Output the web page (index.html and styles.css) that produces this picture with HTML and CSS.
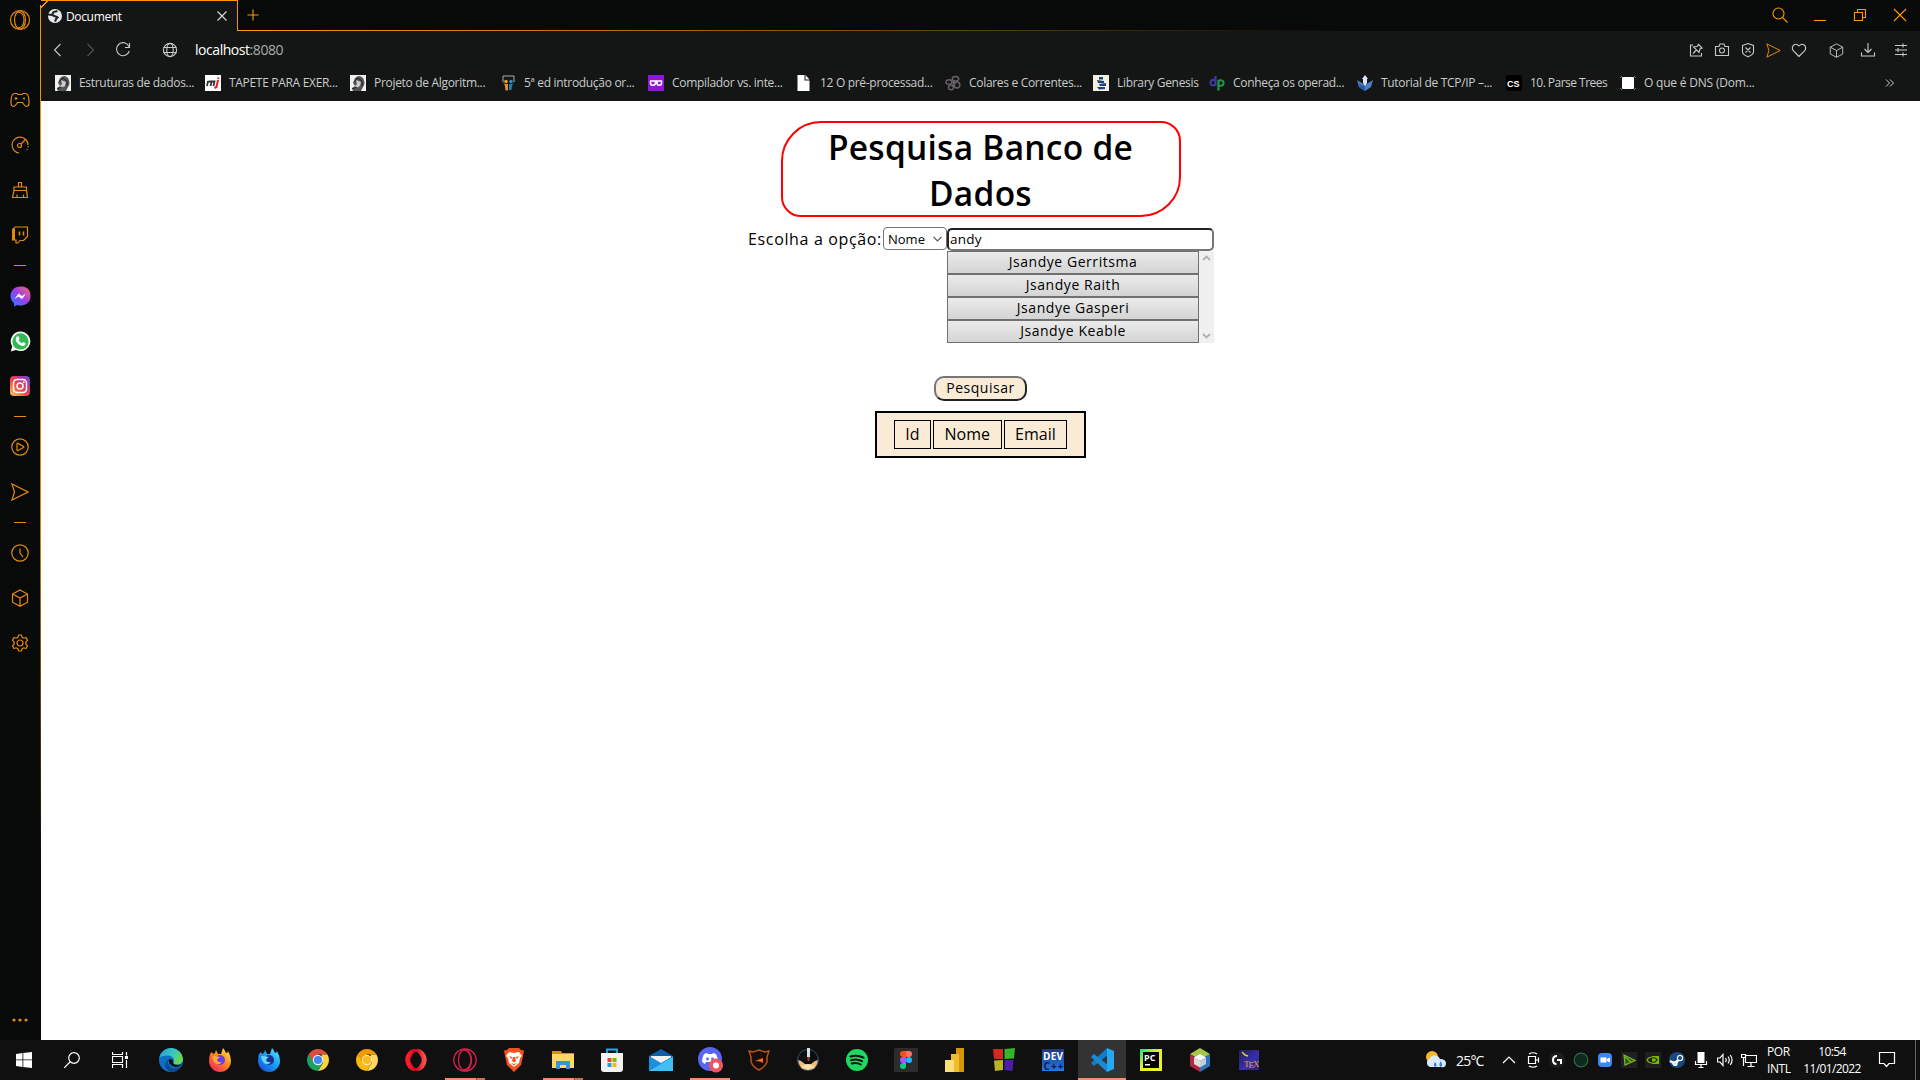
FILE: index.html
```
<!DOCTYPE html>
<html lang="pt-BR">
<head>
<meta charset="utf-8">
<title>Document</title>
<link rel="stylesheet" href="styles.css">
</head>
<body>
<svg class="defs" aria-hidden="true">
  <defs>
    <linearGradient id="gMsg" x1="0" y1="1" x2="1" y2="0"><stop offset="0" stop-color="#1687ff"/><stop offset=".5" stop-color="#9a3cf0"/><stop offset="1" stop-color="#ff6a5c"/></linearGradient>
    <linearGradient id="gIg" x1="0" y1="1" x2="1" y2="0"><stop offset="0" stop-color="#ffd060"/><stop offset=".4" stop-color="#f3503c"/><stop offset=".7" stop-color="#c82d91"/><stop offset="1" stop-color="#5a50d8"/></linearGradient>
    <linearGradient id="gEdge" x1="0" y1="0" x2="1" y2=".4"><stop offset="0" stop-color="#1f9de0"/><stop offset=".6" stop-color="#38c6c0"/><stop offset="1" stop-color="#68d850"/></linearGradient>
    <linearGradient id="gFx" x1="1" y1="0" x2=".2" y2="1"><stop offset="0" stop-color="#fff04a"/><stop offset=".5" stop-color="#ff8a1e"/><stop offset="1" stop-color="#f4205c"/></linearGradient>
    <linearGradient id="gFd" x1="1" y1="0" x2=".2" y2="1"><stop offset="0" stop-color="#5cf0ff"/><stop offset=".5" stop-color="#1aa3f5"/><stop offset="1" stop-color="#1750d8"/></linearGradient>
    <linearGradient id="gOp" x1="0" y1="0" x2="1" y2="0"><stop offset="0" stop-color="#ff1b2d"/><stop offset=".5" stop-color="#c20a1c"/><stop offset="1" stop-color="#ff4b4b"/></linearGradient>
    <linearGradient id="gBlue" x1="0" y1="0" x2="0" y2="1"><stop offset="0" stop-color="#26357c"/><stop offset="1" stop-color="#1f7be8"/></linearGradient>
    <linearGradient id="gPc" x1="0" y1="0" x2="1" y2="1"><stop offset="0" stop-color="#22d88f"/><stop offset=".45" stop-color="#e8f21e"/><stop offset="1" stop-color="#f3ef3a"/></linearGradient>
    <linearGradient id="gTex" x1="0" y1="0" x2="1" y2="1"><stop offset="0" stop-color="#221d55"/><stop offset=".6" stop-color="#3a2fb0"/><stop offset="1" stop-color="#2a1f78"/></linearGradient>
    <symbol id="cube" viewBox="0 0 18 18"><path d="M9 1l7.500 4v8.200L9 17.200l-7.500-4V5zM1.500 5L9 9l7.500-4M9 9v8"/></symbol>
    <symbol id="send" viewBox="0 0 18 18"><path d="M1 1l16 8-16 8 2.500-8z"/></symbol>
    <symbol id="portrait" viewBox="0 0 16 16"><path fill="#f2f2f2" d="M0 0h16v16H0z"/><path fill="#555" d="M5 3q4-4 8 0 3 5 0 9l-2 4H3l-1-3 3-2-2-3z"/><path fill="#ccc" d="M6 5l5 2-1 4-4 2-1-2 2-2z"/><path stroke="#222" fill="none" d="M4 7l4-4 4 3v5M2 14l5-2"/></symbol>
  </defs>
</svg>

<div class="browser">
  <aside class="sidebar">
    <div class="slot slot-logo"><svg width="22" height="22" viewBox="0 0 22 22"><circle cx="11" cy="11" r="9.500"/><ellipse cx="11" cy="11" rx="5.500" ry="9"/><path d="M8 3q7 0 7 8t-7 8"/></svg></div>
    <div class="slot"><svg width="20" height="16" viewBox="0 0 20 16"><path d="M4 1.500h3l1 1h4l1-1h3q3 1 3 9 0 4-2.500 4-1.500 0-4-4h-5q-2.500 4-4 4-2.500 0-2.500-4 0-8 3-9zM4.500 6.500h3M6 5v3"/><path d="M13 6.500h2M14 5.500v2"/></svg></div>
    <div class="slot"><svg width="20" height="20" viewBox="0 0 20 20"><path d="M9 18A8 8 0 1 1 18 10M11 9l4-4"/><circle cx="9.500" cy="10.500" r="2"/><path stroke-dasharray="1 2" d="M18 11q0 4-3 5"/></svg></div>
    <div class="slot"><svg width="18" height="18" viewBox="0 0 18 18"><path d="M7.500 6V1.500h3V6M3 10V6h12.500v4M3 9.500h12.500L16.500 16.500h-15zM6 13.500v3M12.500 13.500v3"/></svg></div>
    <div class="slot"><svg width="18" height="18" viewBox="0 0 18 18"><path d="M2 3l2-2h12.500v9.500l-4 4H9l-2 2.500H5v-3H1.500z"/><path stroke-width="3" d="M2.500 3v11"/><path stroke-width="1.500" d="M8.500 5.500v4M12.500 5.500v4"/></svg></div>
    <div class="rule"></div>
    <div class="slot"><svg class="solid" width="21" height="21" viewBox="0 0 21 21"><path fill="url(#gMsg)" d="M10.500.5C4.500.5.5 4.700.5 10c0 3 1.300 5.300 3.300 7l.4 3.500 3-1.500c7 2 13.300-2 13.300-9S16.500.5 10.500.5z"/><path fill="#fff" d="M4.500 13l4-5.500 3.500 2.500 4-2.500-4 5.800-3.500-2.800z"/></svg></div>
    <div class="slot"><svg class="solid" width="21" height="21" viewBox="0 0 21 21"><path fill="#f5f5f5" d="M10.500.5a9.700 9.700 0 0 0-8.300 14.800L.8 20.500 6 19A9.800 9.800 0 1 0 10.500.5z"/><circle cx="10.500" cy="10.400" r="8.100" fill="#30ba50"/><path fill="#fff" d="M7.200 5.300l1.500.3.900 2.400-1 1.300q1 2 3.300 3l1.300-1.300 2.300 1.200c.3 2-1.500 3-3 2.700-4-.8-6.500-3.900-6.800-6.400q0-2 1.500-3.200z"/></svg></div>
    <div class="slot"><svg class="solid" width="20" height="20" viewBox="0 0 20 20"><rect width="20" height="20" rx="4" fill="url(#gIg)"/><rect x="3.500" y="3.500" width="13" height="13" rx="3.500" fill="none" stroke="#fff" stroke-width="1.500"/><circle cx="10" cy="10" r="3" fill="none" stroke="#fff" stroke-width="1.500"/><circle cx="13.800" cy="6.200" r=".9" fill="#fff"/></svg></div>
    <div class="rule"></div>
    <div class="slot"><svg width="18" height="18" viewBox="0 0 18 18"><circle cx="9" cy="9" r="8.200"/><path d="M6 6q0-1 1-.6l5.500 3q.8.600 0 1.200L7 12.500q-1 .3-1-.5z"/></svg></div>
    <div class="slot"><svg width="18" height="18"><use href="#send"/></svg></div>
    <div class="rule"></div>
    <div class="slot"><svg width="18" height="18" viewBox="0 0 18 18"><circle cx="9" cy="9" r="8.200"/><path d="M9 4.500V9l3 4"/></svg></div>
    <div class="slot"><svg width="18" height="18"><use href="#cube"/></svg></div>
    <div class="slot"><svg width="18" height="18" viewBox="0 0 18 18"><circle cx="9" cy="9" r="3"/><path d="M7.500 1h3l.6 2.300 1.600.9 2.300-.7 1.500 2.600L14.900 8v2l1.600 1.900-1.500 2.600-2.300-.7-1.600.9-.6 2.300h-3l-.6-2.300-1.600-.9-2.300.7-1.500-2.600L3.100 10V8L1.500 6.100 3 3.500l2.300.7 1.600-.9z"/></svg></div>
    <div class="slot slot-more"><svg class="solid" width="18" height="4" viewBox="0 0 18 4"><g fill="#e58a10"><circle cx="3" cy="2" r="1.600"/><circle cx="9" cy="2" r="1.600"/><circle cx="15" cy="2" r="1.600"/></g></svg></div>
  </aside>

  <div class="window">
    <header class="tabs">
      <div class="tab">
        <svg width="14" height="14" viewBox="0 0 14 14"><circle cx="7" cy="7" r="7" fill="#e8eaed"/><path fill="none" stroke="#222" stroke-width="2" d="M0 5.500l4 .5 1.500-3 4-1M4 6l5 2-2 4.500M9 8l1.500 1"/></svg>
        <span>Document</span>
        <svg class="tab-close" width="10" height="10" viewBox="0 0 10 10"><path fill="none" stroke="#ddd" stroke-width="1.100" d="M.5.5l9 9M9.500.5l-9 9"/></svg>
      </div>
      <div class="strip">
        <svg width="12" height="12" viewBox="0 0 12 12"><path d="M6 .5v11M.5 6h11"/></svg>
        <div class="controls">
          <svg width="16" height="16" viewBox="0 0 16 16"><circle cx="6.500" cy="6.500" r="5.500"/><path d="M10.500 10.500l5 5"/></svg>
          <svg width="16" height="16" viewBox="0 0 16 16"><path d="M2 13.500h12"/></svg>
          <svg width="16" height="16" viewBox="0 0 16 16"><path d="M2.500 5.500h8v8h-8zM5.500 5V2.500h8v8H11"/></svg>
          <svg width="16" height="16" viewBox="0 0 16 16"><path d="M2 2l12 12M14 2L2 14"/></svg>
        </div>
      </div>
    </header>

    <div class="toolbar">
      <svg width="16" height="16" viewBox="0 0 16 16"><path d="M11.500 2l-6 6 6 6"/></svg>
      <svg class="dim" width="16" height="16" viewBox="0 0 16 16"><path d="M5.500 2l6 6-6 6"/></svg>
      <svg width="16" height="16" viewBox="0 0 16 16"><path d="M14 4.500A6.500 6.500 0 1 0 14.300 9M14.500 1v4.500H10"/></svg>
      <svg class="globe" width="16" height="16" viewBox="0 0 16 16"><circle cx="8" cy="8" r="6.600"/><ellipse cx="8" cy="8" rx="3.200" ry="6.600"/><path d="M1.500 5.500h13M1.500 10.500h13"/></svg>
      <span class="url">localhost<i>:8080</i></span>
      <div class="actions">
        <svg width="16" height="16" viewBox="0 0 16 16"><path d="M5 3H2.500v11h11v-3M5 11.500l3.500-3.500M10 2l4.500 4.500M10.500 2.500L9 4.500l-3.500.5 5.500 5.500 1-3.500 2-1"/></svg>
        <svg width="16" height="16" viewBox="0 0 16 16"><path d="M1.500 4.500H5l1-2.500h4l1 2.500h3.500v9h-13z"/><circle cx="8" cy="8.500" r="2.500"/></svg>
        <svg width="16" height="16" viewBox="0 0 16 16"><path d="M2.500 3.500L8 1.500l5.500 2v6.500q0 2.500-5.500 4.800-5.500-2.300-5.500-4.800zM5.500 5.500l5 5M10.500 5.500l-5 5"/></svg>
        <svg class="hot" width="15" height="15"><use href="#send"/></svg>
        <svg width="16" height="16" viewBox="0 0 16 16"><path d="M8 14.500L2.500 9Q.2 6 2.500 3.200 5.500 1 8 4q2.500-3 5.500-.8 2.300 2.800 0 5.800z"/></svg>
        <svg class="apart" width="15" height="15"><use href="#cube"/></svg>
        <svg width="16" height="16" viewBox="0 0 16 16"><path d="M8 1v9.500M4.500 7L8 10.500 11.500 7M1.500 10.500v3.500h13v-3.500"/></svg>
        <svg width="16" height="16" viewBox="0 0 16 16"><path d="M2 3.500h12M2 8h12M2 12.500h12M10 1.500v4M5 6v4M10 10.500v4"/></svg>
      </div>
    </div>

    <nav class="bookmarks">
      <a><svg><use href="#portrait"/></svg>Estruturas de dados...</a>
      <a><svg viewBox="0 0 16 16"><path fill="#fff" d="M0 0h16v16H0z"/><path fill="none" stroke="#333" stroke-width="1.800" d="M2 11l1-5M3.500 6.500h6L8.500 11M6.500 7l-1 4"/><path fill="none" stroke="#d22" stroke-width="2" d="M13 5l-1.500 7-2 1M13.500 2.500l-.3 1.500"/></svg>TAPETE PARA EXER...</a>
      <a><svg><use href="#portrait"/></svg>Projeto de Algoritm...</a>
      <a><svg viewBox="0 0 16 16"><path fill="none" stroke="#aaa" d="M3 7V1h11v6"/><circle cx="6" cy="6.500" r="1.800" fill="#f49a2e"/><circle cx="11" cy="6.500" r="1.800" fill="#2b8fc8"/><path fill="#f08a1e" d="M2.500 6l2 3H8v6.500H5.500L5 11z"/><path fill="#1f7cb8" d="M14.500 6l-2 3H9v6h2.500l.5-4z"/></svg>5ª ed introdução or...</a>
      <a><svg viewBox="0 0 16 16"><path fill="#8e16dc" d="M0 0h16v16H0z"/><path fill="none" stroke="#fff" stroke-width="1.600" d="M2 6h12M2.500 6v2q0 2.300 2.300 2.300T7.500 8V6M9 6v2q0 2.300 2.300 2.300T13.500 8V6"/></svg>Compilador vs. inte...</a>
      <a><svg viewBox="0 0 16 16"><path fill="#fff" d="M1.500 0h7v5.500h5V16h-12zM9.500 0l4 4.500h-4z"/></svg>12 O pré-processad...</a>
      <a><svg viewBox="0 0 16 16"><g fill="none" stroke="#66606a" stroke-width="1.500"><ellipse cx="4" cy="7" rx="3" ry="2.300"/><ellipse cx="10.500" cy="3.800" rx="3.200" ry="2.300"/><ellipse cx="12" cy="10" rx="2.800" ry="3"/><ellipse cx="6" cy="12.500" rx="2.500" ry="2.300"/><path d="M6 7l5 1M8 12l1-7"/></g></svg>Colares e Correntes...</a>
      <a><svg viewBox="0 0 16 16"><path fill="#f4efe2" d="M0 0h16v16H0z"/><path fill="#1d3f86" d="M6 2h4v2.500H6zM4 5l7 1v2H5zM6 9l7-1v3H7zM4 12h8v2l-6 .5z"/></svg>Library Genesis</a>
      <a><svg viewBox="0 0 16 16"><g fill="none" stroke-width="2.200"><path stroke="#3d3a9c" d="M6.500 1v10M6.500 5q-5-1-5 2.700t5 2.300"/><path stroke="#1f9a45" d="M9.500 15.500V5M9.500 5.500q5-1 5 2.500t-5 2.500"/></g></svg>Conheça os operad...</a>
      <a><svg viewBox="0 0 16 16"><path fill="#4d7ec8" d="M0 5l8 5 8-5-2 7-6 4-6-4z"/><path fill="#d8e6fa" d="M8 0l3 4h-1v4l-2 3-2-3V4H5z"/><path fill="#2d5ba5" d="M8 11v5l-5-3-1-4z"/></svg>Tutorial de TCP/IP –...</a>
      <a><svg viewBox="0 0 16 16"><rect width="16" height="16" rx="2"/><text x="1" y="11.500" class="cs">CS</text></svg><span class="tight">10. Parse Trees</span></a>
      <a><svg viewBox="0 0 16 16"><rect x="2" y="2" width="12" height="12" rx="1" fill="#fff"/><path fill="none" stroke="#777" d="M0 3l2-2M14 1l2 2M0 13l2 2M14 15l2-2"/></svg><span class="loose">O que é DNS (Dom...</span></a>
      <svg class="overflow" viewBox="0 0 16 16"><path d="M4 4.500L7.500 8 4 11.500M8 4.500L11.500 8 8 11.500"/></svg>
    </nav>

    <main class="page">
      <h1>Pesquisa Banco de Dados</h1>
      <div class="search">
        <label>Escolha a opção:</label>
        <div class="select"><span>Nome</span><svg width="9" height="6" viewBox="0 0 9 6"><path d="M.5.8l4 4 4-4"/></svg></div>
        <div class="field">
          <div class="input">andy</div>
          <div class="results">
            <div class="options">
              <button>Jsandye Gerritsma</button>
              <button>Jsandye Raith</button>
              <button>Jsandye Gasperi</button>
              <button>Jsandye Keable</button>
            </div>
            <div class="scroll">
              <svg width="9" height="6" viewBox="0 0 9 6"><path d="M1 5l3.500-3.500L8 5"/></svg>
              <svg width="9" height="6" viewBox="0 0 9 6"><path d="M1 1l3.500 3.500L8 1"/></svg>
            </div>
          </div>
        </div>
      </div>
      <button class="submit">Pesquisar</button>
      <div class="table"><span>Id</span><span>Nome</span><span>Email</span></div>
    </main>
  </div>
</div>

<footer class="taskbar">
  <div class="app"><svg width="16" height="16" viewBox="0 0 16 16"><path fill="#fff" d="M0 2l6.500-1v6.500H0zM7.300.9L16 0v7.500H7.300zM0 8.300h6.500V15L0 14zM7.300 8.300H16V16l-8.700-1z"/></svg></div>
  <div class="app"><svg class="line" width="16" height="16" viewBox="0 0 16 16"><circle cx="10" cy="6" r="5.300"/><path d="M6 10l-6 6"/></svg></div>
  <div class="app"><svg class="line" width="16" height="16" viewBox="0 0 16 16"><path d="M.5 0v2.500h10V0M.5 4.500h10v6H.5zM.5 16v-3.500h10V16M14.500 0v3.500M14.500 8v8"/><path fill="#fff" d="M13.500 4.500h2v2h-2z"/></svg></div>
  <div class="pins">
    <div class="app"><svg width="24" height="24" viewBox="0 0 24 24"><circle cx="12" cy="12" r="12" fill="#0d70c5"/><path fill="url(#gEdge)" d="M.3 9.500A12 12 0 0 1 24 11c0 4-3 5.500-6 5.500-2.500 0-4-1-3-2.500 1-5-4-7-8-6.500q-4 .5-6.700 2z"/><path fill="#0c4a91" d="M9 12q-1 5 4 8 5 1 9-2-4 6-10 6-7-3-6-9z"/><path fill="#101010" d="M9.500 12q2-2 4 0 1.200 1 0 2.500 1 2.500 6 2.500l3-1q-2 3-6 3-6-1-7-7z"/></svg></div>
    <div class="app"><svg width="24" height="24" viewBox="0 0 24 24"><path fill="url(#gFx)" d="M2 6l2-2 1 2 2-1 1-3 2 4 3 0 2-6q2 2 3 5 2 0 2-2 3 5 3 10a11 11 0 0 1-22 0q0-4 1-7z"/><circle cx="12" cy="12" r="5" fill="#6a3fe0"/><path fill="#ffa63a" d="M4 8q5 0 8 1-2 1-3 3 1 3 5 2-3 4-7 1Q4 12 4 8z"/></svg></div>
    <div class="app"><svg width="24" height="24" viewBox="0 0 24 24"><path fill="url(#gFd)" d="M2 6l2-2 1 2 2-1 1-3 2 4 3 0 2-6q2 2 3 5 2 0 2-2 3 5 3 10a11 11 0 0 1-22 0q0-4 1-7z"/><circle cx="12" cy="12" r="5" fill="#1b2f8e"/><path fill="#5fd8ff" d="M4 8q5 0 8 1-2 1-3 3 1 3 5 2-3 4-7 1Q4 12 4 8z"/></svg></div>
    <div class="app"><svg width="22" height="22" viewBox="0 0 22 22"><path fill="#d94f3f" d="M1.500 5.500a11 11 0 0 1 19 0H11L6.500 14z"/><path fill="#ffd042" d="M20.500 5.500A11 11 0 0 1 11 22l5-8.500L14.500 5.500z"/><path fill="#1ba260" d="M1.500 5.500A11 11 0 0 0 11 22l5-8.500-9.500-.5z"/><circle cx="11" cy="11" r="5.200" fill="#f1f1f1"/><circle cx="11" cy="11" r="4.100" fill="#4285f4"/></svg></div>
    <div class="app"><svg width="22" height="22" viewBox="0 0 22 22"><path fill="#f29900" d="M1.500 5.500a11 11 0 0 1 19 0H11L6.500 14z"/><path fill="#fdd663" d="M20.500 5.500A11 11 0 0 1 11 22l5-8.500L14.500 5.500z"/><path fill="#f9b90a" d="M1.500 5.500A11 11 0 0 0 11 22l5-8.500-9.500-.5z"/><circle cx="11" cy="11" r="5.200" fill="#fbe6b0"/><circle cx="11" cy="11" r="4.100" fill="#f9bb1c"/></svg></div>
    <div class="app"><svg width="22" height="22" viewBox="0 0 22 22"><ellipse cx="11" cy="11" rx="8.200" ry="8.800" fill="none" stroke="url(#gOp)" stroke-width="5"/><ellipse cx="11" cy="11" rx="4.500" ry="8" fill="#101010"/></svg></div>
    <div class="app open stacked"><svg width="24" height="24" viewBox="0 0 24 24"><g fill="none" stroke="#d3204c" stroke-width="1.300"><circle cx="12" cy="12" r="11.200"/><ellipse cx="12" cy="12" rx="6.500" ry="10.500"/><path d="M11 2q7 2 7 10t-7 10"/></g></svg></div>
    <div class="app"><svg width="22" height="24" viewBox="0 0 22 24"><path fill="#f4511e" d="M6 0h10l2 2 3 .5L20 8l-2 9-7 7-7-7L2 8 1 2.500 4 2z"/><path fill="#fff" d="M6 4l5 1 5-1 3 4-2 2-1 5-5 4-5-4-1-5-2-2z"/><path fill="#f4511e" d="M6 8l3.500 1.200L8 11zM16 8l-3.500 1.200L14 11zM10 9h2l1 4-2 1.500L9 13zM8 15l3 1 3-1-3 2.500z"/></svg></div>
    <div class="app open stacked"><svg width="22" height="20" viewBox="0 0 22 20"><path fill="#d99000" d="M0 1h9l1 2h12v15H0z"/><path fill="#ffd767" d="M0 4h22v14H0z"/><path fill="#3b93d8" d="M4 11h14v8h-4v-4H8v4H4z"/></svg></div>
    <div class="app"><svg width="24" height="24" viewBox="0 0 24 24"><path fill="none" stroke="#25a9f0" stroke-width="1.800" d="M7 6V1.500h10V6"/><path fill="#f3f3f3" d="M1 5h22v16q0 3-3 3H4q-3 0-3-3z"/><path fill="#e8492b" d="M7.500 10h4v4h-4z"/><path fill="#7fba00" d="M12.500 10h4v4h-4z"/><path fill="#1aa0e8" d="M7.500 15h4v4h-4z"/><path fill="#ffb900" d="M12.500 15h4v4h-4z"/></svg></div>
    <div class="app"><svg width="24" height="22" viewBox="0 0 24 22"><path fill="#0d5fa8" d="M0 7l12-7 12 7v4H0z"/><path fill="#f1f1f1" d="M2 7h20v5l-10 5-10-5z"/><path fill="#1b8ee0" d="M0 7l12 7 12-7v15H0z"/><path fill="#3fc0f5" d="M0 22L24 8v14z"/></svg></div>
    <div class="app open"><svg width="26" height="26" viewBox="0 0 26 26"><circle cx="13" cy="12" r="12" fill="#5865f2"/><path fill="#fff" d="M7 7l3-1 1 1h4l1-1 3 1q2 4 2 8l-3 2-1-2h-8l-1 2-3-2q0-4 2-8z"/><circle cx="10.500" cy="12" r="1.400" fill="#5865f2"/><circle cx="15.500" cy="12" r="1.400" fill="#5865f2"/><circle cx="19" cy="18.500" r="7" fill="#ed5560"/><circle cx="19" cy="18.500" r="3" fill="#fff"/></svg></div>
    <div class="app"><svg width="22" height="22" viewBox="0 0 22 22"><path fill="#160d08" stroke="#b8511c" stroke-width="1.500" d="M1 2l4 1 6-2 6 2 4-1-2 6v5q-2 5-8 8-6-3-8-8V8z"/><path fill="#ff6a13" d="M7 12l8-3v5l-3-1.500z"/></svg></div>
    <div class="app"><svg width="24" height="24" viewBox="0 0 24 24"><circle cx="12" cy="12" r="10.500" fill="#0c0d10" stroke="#2b4f78"/><path fill="#efbd78" d="M2 12l3 1 4 3h6l4-3 3-1q-1 10-10 10T2 12z"/><path fill="#fae0b0" d="M5 18q7-3 14 0l-7 4z"/><path fill="#ddd" d="M11 0h3v9h-3z"/><path fill="#a33" d="M11.500 9h2v4h-2z"/></svg></div>
    <div class="app"><svg width="22" height="22" viewBox="0 0 22 22"><circle cx="11" cy="11" r="11" fill="#1ed760"/><path fill="none" stroke="#101010" stroke-linecap="round" stroke-width="2" d="M4.500 7.500q7-2 13 1.200M5 11.200q6-1.700 11 1M5.700 14.500q5-1.300 9 1"/></svg></div>
    <div class="app"><svg width="24" height="24" viewBox="0 0 24 24"><rect width="24" height="24" rx="1.500" fill="#2c2c2c"/><path fill="#f24e1e" d="M12 3H9a3 3 0 0 0 0 6h3z"/><path fill="#ff7262" d="M12 3h3a3 3 0 0 1 0 6h-3z"/><path fill="#a259ff" d="M12 9H9a3 3 0 0 0 0 6h3z"/><circle cx="15" cy="12" r="3" fill="#1abcfe"/><path fill="#0acf83" d="M12 15H9a3 3 0 1 0 3 3z"/></svg></div>
    <div class="app"><svg width="20" height="24" viewBox="0 0 20 24"><path fill="#d4960c" d="M11 0h8v24h-8z"/><path fill="#efbe2c" d="M6 6h8v18H6z"/><path fill="#fbdf78" d="M0 12h9v12H0z"/></svg></div>
    <div class="app"><svg width="22" height="24" viewBox="0 0 22 24"><path fill="#d02a1e" d="M0 1l10 0v10L1 11z"/><path fill="#35b629" d="M11.500 1L22 0l-1 10.500-9.500.5z"/><path fill="#b9b327" d="M1 12.500l9-.5v10L2 23z"/><path fill="#4a1fa5" d="M11.500 12l9 0-1 11-8-1z"/></svg></div>
    <div class="app"><svg width="22" height="22" viewBox="0 0 22 22"><path fill="url(#gBlue)" d="M0 0h22v22H0z"/><text x="1" y="10.500" class="dev" textLength="20">DEV</text><text x="1.500" y="20.500" class="cpp" textLength="20">C++</text></svg></div>
    <div class="app open active"><svg width="24" height="24" viewBox="0 0 24 24"><path fill="#0f7ec8" d="M17 0l1 7L4 18l-3-3z"/><path fill="#1a8ad6" d="M4 6l14 11-1 7L1 9z"/><path fill="#29a8f2" d="M17 0l7 3v18l-7 3z"/></svg></div>
    <div class="app"><svg width="22" height="22" viewBox="0 0 22 22"><path fill="url(#gPc)" d="M0 0h22v22H0z"/><path d="M3 3h16v16H3z"/><text x="4" y="11.500" class="pc">PC</text><path fill="#fff" d="M5 15h5v1.500H5z"/></svg></div>
    <div class="app"><svg width="22" height="24" viewBox="0 0 22 24"><path fill="#a7c549" d="M11 0l10 6-10 6L1 6z"/><path fill="#b02846" d="M1 6l10 6v12L1 18z"/><path fill="#2f74b8" d="M21 6l-10 6v12l10-6z"/><path fill="#f6f6f6" d="M11 6l6 3.500-6 3.500-6-3.500z"/><path fill="#ddd" d="M5 9.500l6 3.500v6.500L5 16z"/><path fill="#c3cfdc" d="M17 9.500L11 13v6.500l6-3.500z"/></svg></div>
    <div class="app"><svg width="20" height="20" viewBox="0 0 20 20"><path fill="url(#gTex)" d="M0 0h20v20H0z"/><path fill="none" stroke="#d8d23f" stroke-width="1.500" d="M3 2l3 3 3 1"/><text x="5" y="16.500" class="tex">T<tspan dy="1.500">E</tspan><tspan dy="-1.500">X</tspan></text></svg></div>
  </div>
  <div class="tray">
    <div class="weather">
      <svg width="22" height="18" viewBox="0 0 22 18"><circle cx="7" cy="6" r="6" fill="#f8b62d"/><path fill="#dbe9f8" d="M5 16a4.500 4.500 0 0 1 0-8.500q2-4 6-3 3 .5 4 3.500 6 0 6 4.500T16 16z"/><path fill="#2c86e0" d="M10 11q3 3 .5 5-3-1-.5-5zM15.500 10q3 4 .5 6-3-1-.5-6z"/></svg>
      <span>25°C</span>
    </div>
    <div class="icons">
      <svg viewBox="0 0 16 16"><path d="M2 11l6-6 6 6"/></svg>
      <svg viewBox="0 0 16 16"><path d="M3.500 4.500h7v7h-7zM11 8h3M13.500 5.500v5M4 2q4-2.500 8 0M4 14q4 2.500 8 0"/></svg>
      <svg viewBox="0 0 16 16"><circle cx="8" cy="8" r="8" fill="#1c1c1c" stroke="none"/><path stroke-width="2" d="M8 4q-4 0-4 4t3.500 4M8 8h4v4"/></svg>
      <svg viewBox="0 0 16 16"><circle cx="8" cy="8" r="6.800" fill="#10291f" stroke="#2a6a4c"/></svg>
      <svg viewBox="0 0 16 16"><rect x="1" y="1" width="14" height="14" rx="4" fill="#3d86f5" stroke="none"/><path fill="#fff" stroke="none" d="M3.500 5.500h6v5h-6zM10 7l3-1.500v5L10 9z"/></svg>
      <svg viewBox="0 0 16 16"><path fill="#202020" stroke="none" d="M0 0h16v16H0z"/><path fill="#2f5a12" stroke="#79b82a" d="M3 3l11 5.500L4 13zM4 5l6 5"/></svg>
      <svg viewBox="0 0 16 16"><path fill="#202020" stroke="none" d="M0 0h16v16H0z"/><path fill="#76b900" stroke="none" d="M7 4h7v8H7z"/><path stroke="#76b900" d="M7 5Q3 5.500 2 8q1.500 3 5 3"/><path stroke="#202020" d="M7 6q4-1 5 2-2 3-5 2"/></svg>
      <svg viewBox="0 0 16 16"><circle cx="8" cy="8" r="8" fill="#174a80" stroke="none"/><circle cx="11" cy="6" r="2.600"/><path stroke-width="2.500" d="M1 9l5 2.500 3-3"/><circle cx="6" cy="11.500" r="2" fill="#ddd"/></svg>
      <svg viewBox="0 0 16 16"><path fill="#fff" stroke="none" d="M4.500 0h7v11h-7z"/><path d="M2.500 9v3.500h11V9M8 12.500V16M5.500 15.500h5"/></svg>
      <svg viewBox="0 0 16 16"><path d="M.5 6H3l3-3.500v11L3 10H.5zM8.500 6q1.500 2 0 4M11 4.500q2.500 3.500 0 7M13.300 3q3.500 5 0 10"/></svg>
      <svg viewBox="0 0 16 16"><path d="M4.500 3.500h11v7h-11zM10 10.500V14M6.500 14.500h7M.5 2.500h4v3h-4zM2.500 5.500V14"/></svg>
    </div>
    <div class="lang">POR<br>INTL</div>
    <div class="clock"><span>10:54</span><br>11/01/2022</div>
    <svg class="line note" width="18" height="18" viewBox="0 0 18 18"><path d="M1.500 1.500h15v11H11l-2.500 3-2.500-3H1.500z"/></svg>
    <div class="peek"></div>
  </div>
</footer>
</body>
</html>
```
FILE: styles.css
```
* { box-sizing: border-box; }
body {
  margin: 0;
  width: 1920px;
  height: 1080px;
  overflow: hidden;
  display: flex;
  flex-direction: column;
  background: #fff;
  font-family: "Open Sans", sans-serif;
}
svg { display: block; flex: none; }
.defs { position: absolute; width: 0; height: 0; }
.browser { display: flex; height: 1040px; }

/* sidebar */
.sidebar {
  width: 41px;
  padding-right: 1px;
  display: flex;
  flex-direction: column;
  background: linear-gradient(#f39508 0, #d9850b 520px, #704708 680px, #080a09 860px) right 5px / 1px 100% no-repeat #080a09;
}
.slot { height: 45px; display: flex; align-items: center; justify-content: center; flex: none; }
.slot svg:not(.solid) { fill: none; stroke: #e58a10; stroke-width: 1.2; }
.slot-logo { height: 40px; margin-bottom: 37.5px; }
.slot-more { margin-top: auto; height: 40px; }
.rule { height: 16px; flex: none; background: linear-gradient(#e58a10, #e58a10) center / 12px 1px no-repeat; }

/* tab strip and toolbar */
.window { flex: 1; display: flex; flex-direction: column; min-width: 0; }
.tabs { display: flex; height: 31px; background: #080a09; }
.tab {
  width: 197px;
  padding: 0 10px 0 7px;
  display: flex;
  align-items: center;
  gap: 4px;
  background: linear-gradient(135deg, #080a09 4px, #ff9800 4px, #ff9800 5px, transparent 5px) left top / 8px 8px no-repeat #141615;
  border-top: 1px solid #ff9800;
  border-right: 1px solid #ff9800;
  color: #fff;
  font-size: 12px;
  letter-spacing: -.35px;
}
.tab-close { margin-left: auto; }
.strip {
  flex: 1;
  display: flex;
  align-items: flex-start;
  padding: 9px 12px 0 9px;
  background: linear-gradient(90deg, #ff9800, #c77a0a 300px, #080a09 1100px) left bottom / 100% 1px no-repeat;
}
.strip svg { fill: none; stroke: #ff9800; stroke-width: 1.1; }
.controls { margin-left: auto; margin-top: -2px; display: flex; gap: 24px; }
.toolbar {
  height: 38px;
  padding: 0 11px 0 8px;
  display: flex;
  align-items: center;
  background: #141615;
}
.toolbar svg { fill: none; stroke: #c5cac8; stroke-width: 1.1; margin-right: 17px; }
.toolbar .dim { stroke: #555; margin-right: 17px; }
.toolbar .globe { margin: 0 17px 0 14px; }
.url { color: #fff; font-size: 14px; letter-spacing: -.45px; line-height: 18px; padding-bottom: 1px; }
.url i { font-style: normal; color: #a9adab; }
.toolbar .actions { margin-left: auto; display: flex; align-items: center; gap: 10px; }
.toolbar .actions svg { margin: 0; }
.toolbar .actions .hot { stroke: #f39508; }
.toolbar .actions .apart { margin: 0 6px 0 12px; }
.toolbar .actions .apart ~ svg + svg { margin-left: 7px; }
.bookmarks {
  height: 32px;
  padding: 0 8px 5px 14px;
  display: grid;
  grid-template-columns: 150px 145px 150px 148px 148px 149px 148px 116px 148px 149px 114px 1fr 30px;
  align-items: center;
  background: #141615;
}
.bookmarks a {
  display: flex;
  align-items: center;
  gap: 8px;
  white-space: nowrap;
  color: #c9cccb;
  font-size: 12px;
  line-height: 16px;
  letter-spacing: -.31px;
}
.tight { letter-spacing: -.53px; }
.loose { letter-spacing: -.2px; }
.bookmarks svg { width: 16px; height: 16px; }
.bookmarks .overflow { fill: none; stroke: #c9cccb; }
.cs { font: bold 9px "Liberation Sans", sans-serif; fill: #fff; letter-spacing: 0; }

/* page content */
.page { flex: 1; display: flex; flex-direction: column; align-items: center; padding-top: 20px; background: #fff; color: #000; }
h1 {
  width: 400px;
  height: 96px;
  margin: 0 0 10px;
  border: 2px solid red;
  border-radius: 40px 20px;
  text-align: center;
  padding: 1px 30px 0;
  font-size: 33.500px;
  line-height: 46px;
  letter-spacing: .25px;
  font-weight: 600;
}
.search { display: flex; align-items: flex-start; height: 149px; margin-left: 1px; }
label { font-size: 16px; line-height: 24px; width: 135px; white-space: nowrap; letter-spacing: .65px; }
.select {
  width: 64px;
  height: 23px;
  display: flex;
  align-items: center;
  justify-content: space-between;
  padding: 0 4px;
  border: 1px solid #767676;
  border-radius: 4px;
  font-size: 13px;
}
.select svg { fill: none; stroke: #555; stroke-width: 1.200; }
.field { width: 267px; padding-top: 1px; }
.input {
  height: 23px;
  padding: 0 1px;
  border: 2px solid;
  border-color: #222 #767676 #767676 #222;
  border-radius: 5px;
  font-size: 13.500px;
  line-height: 19px;
  letter-spacing: .25px;
}
.results { display: flex; height: 92px; }
.options { width: 252px; display: flex; flex-direction: column; }
.options button {
  height: 23px;
  padding: 0 0 1px;
  border: 1px solid #707070;
  border-radius: 0;
  background: linear-gradient(#ebebeb, #d4d4d4);
  color: #000;
  font: 14px/20px "Open Sans", sans-serif;
  letter-spacing: .55px;
}
.scroll { flex: 1; display: flex; flex-direction: column; justify-content: space-between; align-items: center; padding: 4px 0; background: #f0f0f0; }
.scroll svg { fill: none; stroke: #b0b0b0; stroke-width: 1.800; }
.submit {
  width: 93px;
  height: 25px;
  margin: 0 0 10px;
  padding: 0 0 1px;
  border: 2px solid;
  border-color: #767676 #222 #222 #767676;
  border-radius: 10px;
  background: #faebd7;
  color: #000;
  font: 14px/20px "Open Sans", sans-serif;
  letter-spacing: .5px;
}
.table { display: flex; gap: 2px; padding: 7px 17px; border: 2px solid #000; background: #faebd7; font-size: 16px; }
.table span { height: 29px; padding: 0 10.500px; border: 1px solid #000; line-height: 27px; }

/* taskbar */
.taskbar { height: 40px; display: flex; background: #101010; }
.app { width: 48px; height: 40px; display: flex; align-items: center; justify-content: center; }
.pins { display: flex; gap: 1px; margin-left: 3px; }
.open { background: linear-gradient(#f78b70, #f78b70) center bottom / 40px 2px no-repeat; }
.stacked { background-image: linear-gradient(90deg, #f78b70 31px, #8a5244 31px, #8a5244 32px, #c66f59 32px); }
.active { background-color: #333; background-size: 48px 2px; }
.line { fill: none; stroke: #fff; stroke-width: 1.200; }
.dev, .cpp, .pc, .tex { font: bold 10px "Open Sans", sans-serif; fill: #fff; }
.cpp { fill: #0a1a50; }
.pc { font-size: 9px; }
.tex { font: 9px "Liberation Serif", serif; fill: #e0a93c; letter-spacing: -1px; }
.tray { margin-left: auto; display: flex; align-items: center; color: #fff; font-size: 12px; }
.weather { display: flex; align-items: center; gap: 9px; font-size: 14px; letter-spacing: -.8px; width: 76px; }
.icons { display: flex; gap: 8px; }
.icons svg { width: 16px; height: 16px; fill: none; stroke: #fff; stroke-width: 1.200; }
.lang { margin-left: 10px; width: 36px; line-height: 17px; letter-spacing: -.4px; }
.clock { width: 58px; text-align: center; line-height: 17px; letter-spacing: -.62px; white-space: nowrap; }
.note { margin-left: 17px; }
.peek { width: 5px; height: 40px; margin-left: 19px; border-left: 1px solid #666; }
```
